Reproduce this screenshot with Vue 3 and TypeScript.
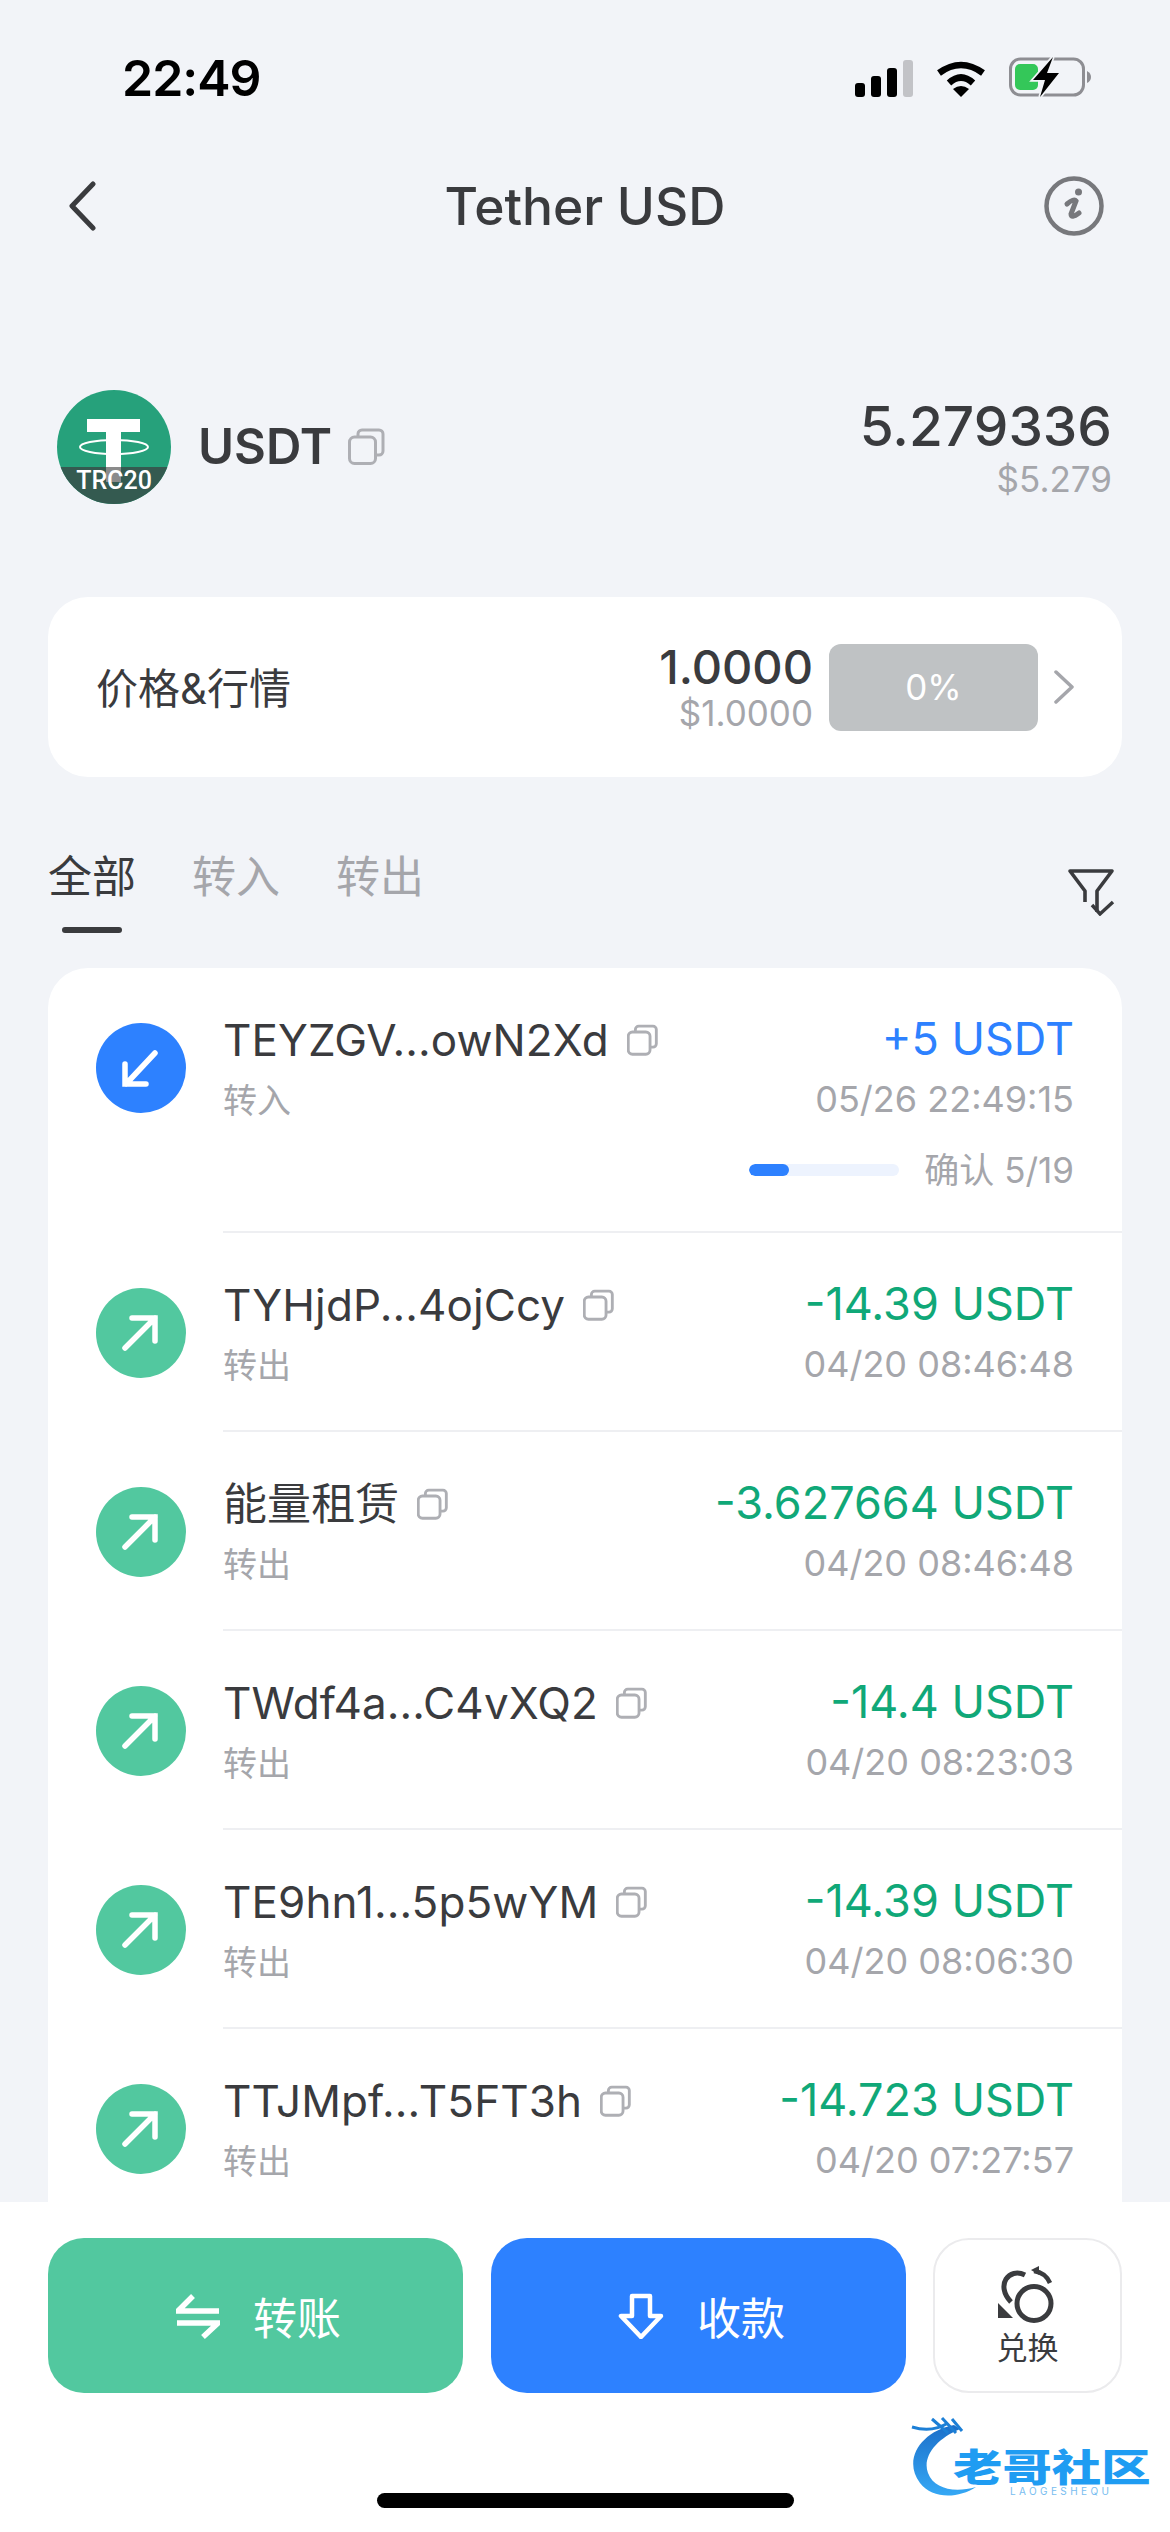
<template>
  <div class="page">
    <div class="content">
      <!-- status bar -->
      <div class="status">
        <span class="time">22:49</span>
        <div class="status-icons">
          <svg width="58" height="37" viewBox="0 0 58 37">
            <rect x="0" y="23" width="10" height="14" rx="3" fill="#000" />
            <rect x="16" y="16" width="10" height="21" rx="3" fill="#000" />
            <rect x="32" y="8" width="10" height="29" rx="3" fill="#000" />
            <rect x="48" y="0" width="10" height="37" rx="3" fill="#c2c3c7" />
          </svg>
          <svg width="50" height="37" viewBox="0 0 50 37">
            <path d="M3 13Q25 -3 47 13" fill="none" stroke="#000" stroke-width="6.5" />
            <path d="M13 23Q25 12 37 23" fill="none" stroke="#000" stroke-width="6.5" />
            <path d="M25 37L17 29Q25 23 33 29Z" fill="#000" />
          </svg>
          <svg width="84" height="42" viewBox="0 0 84 42">
            <rect x="1.5" y="2" width="73" height="36" rx="10" fill="none" stroke="#8e8e93" stroke-width="3" />
            <path d="M78 14Q82 16 82 20Q82 24 78 26Z" fill="#8e8e93" />
            <rect x="6" y="7" width="23" height="26" rx="5" fill="#34c759" />
            <path d="M44 0L24 23H36L31 40L50 16H38Z" fill="#000" stroke="#f2f4f8" stroke-width="3.5" paint-order="stroke" />
          </svg>
        </div>
      </div>

      <!-- nav -->
      <div class="nav">
        <svg class="back" width="32" height="50" viewBox="0 0 32 50">
          <path d="M27 3L6 25L27 47" fill="none" stroke="#3a3b3e" stroke-width="5" stroke-linecap="round" stroke-linejoin="round" />
        </svg>
        <span class="nav-title">Tether USD</span>
        <svg class="info" width="60" height="60" viewBox="0 0 60 60">
          <circle cx="30" cy="30" r="27.5" fill="none" stroke="#77787c" stroke-width="4.5" />
          <circle cx="34.5" cy="16" r="3.5" fill="#77787c" />
          <path d="M23 28Q30 22 32 25L27 38Q27 43 35 37" fill="none" stroke="#77787c" stroke-width="5" stroke-linecap="round" />
        </svg>
      </div>

      <!-- asset -->
      <div class="asset">
        <div class="asset-left">
          <svg width="114" height="114" viewBox="0 0 114 114">
            <defs>
              <clipPath id="logoClip"><circle cx="57" cy="57" r="57" /></clipPath>
            </defs>
            <circle cx="57" cy="57" r="57" fill="#26a17b" />
            <rect x="30" y="29" width="53" height="13" fill="#fff" />
            <rect x="49" y="42" width="15" height="36" fill="#fff" />
            <ellipse cx="57" cy="57" rx="34" ry="7" fill="none" stroke="#fff" stroke-width="2" />
            <g clip-path="url(#logoClip)">
              <rect x="0" y="77" width="114" height="37" fill="#345a50" />
              <rect x="49" y="77" width="15" height="15" fill="#8b8b8b" />
            </g>
            <text x="57" y="99" text-anchor="middle" class="logo-text">TRC20</text>
          </svg>
          <span class="asset-name">USDT</span>
          <svg width="37" height="37" viewBox="0 0 37 37">
            <path d="M10 8V6a4 4 0 0 1 4-4H31a4 4 0 0 1 4 4V23a4 4 0 0 1-4 4H28" fill="none" stroke="#aeafb4" stroke-width="3" />
            <rect x="1.5" y="9" width="26" height="26.5" rx="5" fill="none" stroke="#aeafb4" stroke-width="3" />
          </svg>
        </div>
        <div class="asset-right">
          <div class="balance">5.279336</div>
          <div class="fiat">$5.279</div>
        </div>
      </div>

      <!-- price card -->
      <div class="price-card">
        <span class="price-label">价格&amp;行情</span>
        <div class="price-right">
          <div class="price-values">
            <div class="price-main">1.0000</div>
            <div class="price-fiat">$1.0000</div>
          </div>
          <div class="chip">0%</div>
          <svg width="22" height="34" viewBox="0 0 22 34">
            <path d="M3 2L19 17L3 32" fill="none" stroke="#a5a6ab" stroke-width="3.5" stroke-linecap="round" stroke-linejoin="round" />
          </svg>
        </div>
      </div>

      <!-- tabs -->
      <div class="tabs">
        <div class="tab-list">
          <div v-for="tab in tabs" :key="tab" class="tab" :class="{ active: tab === activeTab }">
            <span>{{ tab }}</span>
            <i class="tab-line"></i>
          </div>
        </div>
        <svg class="filter" width="48" height="48" viewBox="0 0 48 48">
          <path d="M30 44V23L45 3H3L18 23V34" fill="none" stroke="#3a3b3e" stroke-width="3.6" stroke-linejoin="round" />
          <path d="M25 37L33 46L46 34" fill="none" stroke="#3a3b3e" stroke-width="3.4" />
        </svg>
      </div>

      <!-- records -->
      <div class="list">
        <div v-for="item in records" :key="item.name" class="row">
          <div class="row-icon" :class="item.dir">
            <svg v-if="item.dir === 'in'" width="90" height="90" viewBox="0 0 90 90">
              <path d="M59 30L30 61M29 41V61H50" fill="none" stroke="#fff" stroke-width="5.5" stroke-linecap="round" />
            </svg>
            <svg v-else width="90" height="90" viewBox="0 0 90 90">
              <path d="M29 60L59 30M36 30H59V53" fill="none" stroke="#fff" stroke-width="5.5" stroke-linecap="round" />
            </svg>
          </div>
          <div class="row-body">
            <div class="row-line">
              <div class="row-left">
                <div class="row-name">
                  <span>{{ item.name }}</span>
                  <svg width="31" height="32" viewBox="0 0 37 37">
                    <path d="M10 8V6a4 4 0 0 1 4-4H31a4 4 0 0 1 4 4V23a4 4 0 0 1-4 4H28" fill="none" stroke="#aeafb4" stroke-width="3.4" />
                    <rect x="1.5" y="9" width="26" height="26.5" rx="5" fill="none" stroke="#aeafb4" stroke-width="3.4" />
                  </svg>
                </div>
                <div class="row-sub">{{ item.dir === 'in' ? '转入' : '转出' }}</div>
              </div>
              <div class="row-right">
                <div class="row-amount" :class="item.dir">{{ item.amount }}</div>
                <div class="row-date">{{ item.date }}</div>
              </div>
            </div>
            <div v-if="item.confirm" class="confirm">
              <div class="confirm-bar">
                <div class="confirm-fill" :style="{ width: (item.confirm[0] / item.confirm[1]) * 100 + '%' }"></div>
              </div>
              <span class="confirm-text">确认 {{ item.confirm[0] }}/{{ item.confirm[1] }}</span>
            </div>
          </div>
        </div>
      </div>
    </div>

    <!-- bottom actions -->
    <div class="bottom">
      <div class="actions">
        <div class="btn green">
          <svg width="44" height="46" viewBox="0 0 44 46">
            <path d="M17 3L2 18H43M1 30H42L27 44" fill="none" stroke="#fff" stroke-width="5.5" />
          </svg>
          <span>转账</span>
        </div>
        <div class="btn blue">
          <svg width="46" height="46" viewBox="0 0 46 46">
            <path d="M14 3H32V23H43L23 44L3 23H14Z" fill="none" stroke="#fff" stroke-width="4.5" stroke-linejoin="round" />
          </svg>
          <span>收款</span>
        </div>
        <div class="swap">
          <svg width="62" height="60" viewBox="0 0 62 60">
            <circle cx="37" cy="38.5" r="17" fill="none" stroke="#3a3b3e" stroke-width="5" />
            <path d="M28 10C12 2 -2 20 14 37" fill="none" stroke="#3a3b3e" stroke-width="5" />
            <path d="M37 6C44 7 50 11 53 18" fill="none" stroke="#3a3b3e" stroke-width="4.5" />
            <path d="M34 5L42 1V10Z" fill="#3a3b3e" />
            <path d="M1 38L16 53H1Z" fill="#3a3b3e" />
          </svg>
          <span>兑换</span>
        </div>
      </div>
      <div class="home-bar"></div>

      <!-- watermark -->
      <div class="watermark">
        <svg width="70" height="90" viewBox="0 0 70 90">
          <defs>
            <linearGradient id="wmGrad" x1="0" y1="0" x2="0" y2="1">
              <stop offset="0" stop-color="#1c6fc9" />
              <stop offset="1" stop-color="#35a8f5" />
            </linearGradient>
          </defs>
          <path d="M46 10C14 16 -6 44 12 68C24 84 50 84 68 72C46 78 26 74 20 58C14 42 28 24 52 14Z" fill="url(#wmGrad)" />
          <path d="M4 12Q24 18 40 8M24 4L40 18M34 3L48 18M44 4L54 16" fill="none" stroke="#1c7fd6" stroke-width="3" />
        </svg>
        <div class="wm-text">老哥社区</div>
        <div class="wm-sub">LAOGESHEQU</div>
      </div>
    </div>
  </div>
</template>

<script setup lang="ts">
interface TxRecord {
  name: string
  dir: 'in' | 'out'
  amount: string
  date: string
  confirm?: [number, number]
}

const tabs: string[] = ['全部', '转入', '转出']
const activeTab = '全部'

const records: TxRecord[] = [
  { name: 'TEYZGV...owN2Xd', dir: 'in', amount: '+5 USDT', date: '05/26 22:49:15', confirm: [5, 19] },
  { name: 'TYHjdP...4ojCcy', dir: 'out', amount: '-14.39 USDT', date: '04/20 08:46:48' },
  { name: '能量租赁', dir: 'out', amount: '-3.627664 USDT', date: '04/20 08:46:48' },
  { name: 'TWdf4a...C4vXQ2', dir: 'out', amount: '-14.4 USDT', date: '04/20 08:23:03' },
  { name: 'TE9hn1...5p5wYM', dir: 'out', amount: '-14.39 USDT', date: '04/20 08:06:30' },
  { name: 'TTJMpf...T5FT3h', dir: 'out', amount: '-14.723 USDT', date: '04/20 07:27:57' }
]
</script>

<style scoped>
.page {
  position: relative;
  width: 1170px;
  height: 2532px;
  display: flex;
  flex-direction: column;
  overflow: hidden;
  background: #f2f4f8;
  color: #3a3b3e;
  font-family: Inter, "Noto Sans CJK SC", sans-serif;
}

.content {
  flex: 1;
  min-height: 0;
  overflow: hidden;
}

.status {
  height: 156px;
  display: flex;
  align-items: center;
  justify-content: space-between;
  padding: 0 77px 0 122px;
}

.time {
  font-size: 50px;
  font-weight: 600;
  color: #000;
  letter-spacing: -1px;
}

.status-icons {
  display: flex;
  align-items: center;
  gap: 23px;
}

.nav {
  height: 100px;
  display: flex;
  align-items: center;
  padding: 0 66px;
}

.back {
  margin-right: 28px;
}

.nav-title {
  flex: 1;
  text-align: center;
  font-size: 51.5px;
  font-weight: 500;
}

.asset {
  margin-top: 134px;
  height: 113px;
  display: flex;
  align-items: center;
  justify-content: space-between;
  padding: 0 58px 0 57px;
}

.asset-left {
  display: flex;
  align-items: center;
}

.logo-text {
  font-family: Roboto, sans-serif;
  font-size: 25px;
  font-weight: 500;
  fill: #fff;
}

.asset-name {
  font-size: 49px;
  font-weight: 600;
  margin: 0 16px 0 27px;
}

.asset-right {
  text-align: right;
}

.balance {
  font-size: 55px;
  font-weight: 500;
  line-height: 64px;
}

.fiat {
  font-size: 35px;
  line-height: 40px;
  margin-top: 1px;
  color: #a5a6ab;
}

.price-card {
  margin: 94px 48px 0;
  height: 180px;
  background: #fff;
  border-radius: 40px;
  display: flex;
  align-items: center;
  justify-content: space-between;
  padding: 0 47px 0 48px;
}

.price-label {
  font-size: 42px;
  margin-top: -4px;
}

.price-right {
  display: flex;
  align-items: center;
}

.price-values {
  text-align: right;
}

.price-main {
  font-size: 47px;
  font-weight: 500;
  line-height: 52px;
}

.price-fiat {
  font-size: 35px;
  line-height: 40px;
  color: #a5a6ab;
}

.chip {
  width: 209px;
  height: 87px;
  margin: 0 15px 0 16px;
  border-radius: 12px;
  background: #bfc2c4;
  color: #fff;
  font-size: 35px;
  display: flex;
  align-items: center;
  justify-content: center;
}

.tabs {
  margin-top: 71px;
  padding: 0 55px 0 48px;
  display: flex;
  align-items: flex-start;
  justify-content: space-between;
}

.tab-list {
  display: flex;
  gap: 56px;
}

.tab {
  display: flex;
  flex-direction: column;
  align-items: center;
  font-size: 44px;
  line-height: 58px;
  color: #a5a6ab;
}

.tab.active {
  color: #3a3b3e;
}

.tab-line {
  width: 60px;
  height: 6px;
  margin-top: 21px;
  border-radius: 3px;
}

.tab.active .tab-line {
  background: #3a3b3e;
}

.filter {
  margin-top: 20px;
}

.list {
  margin: 35px 48px 0;
  background: #fff;
  border-radius: 40px 40px 0 0;
}

.row {
  display: flex;
  padding-left: 48px;
}

.row-icon {
  width: 90px;
  height: 90px;
  margin: 55px 37px 0 0;
  border-radius: 50%;
  flex-shrink: 0;
}

.row-icon.in {
  background: #2d81ff;
}

.row-icon.out {
  background: #52c89f;
}

.row-body {
  flex: 1;
  min-width: 0;
  padding: 44px 48px 0 0;
  min-height: 199px;
  box-sizing: border-box;
  border-bottom: 2px solid #eeeff2;
}

.row-line {
  display: flex;
  justify-content: space-between;
}

.row-name {
  display: flex;
  align-items: center;
  gap: 18px;
  font-size: 44px;
  line-height: 56px;
  letter-spacing: 0.1px;
}

.row-sub {
  font-size: 34px;
  line-height: 40px;
  margin-top: 13px;
  color: #a5a6ab;
}

.row-right {
  text-align: right;
}

.row-amount {
  font-size: 45px;
  line-height: 54px;
}

.row-amount.in {
  color: #2d81ff;
}

.row-amount.out {
  color: #10a878;
}

.row-date {
  font-size: 36px;
  line-height: 40px;
  margin-top: 13px;
  color: #a5a6ab;
}

.confirm {
  display: flex;
  align-items: center;
  justify-content: flex-end;
  gap: 25px;
  height: 40px;
  margin: 29px 0 41px;
}

.confirm-text {
  font-size: 35px;
  line-height: 40px;
  color: #a5a6ab;
}

.confirm-bar {
  width: 150px;
  height: 12px;
  border-radius: 6px;
  background: #edf3fe;
  overflow: hidden;
}

.confirm-fill {
  height: 100%;
  border-radius: 6px;
  background: #2d81ff;
}

.bottom {
  position: relative;
  height: 330px;
  flex-shrink: 0;
  background: #fff;
  padding: 36px 48px 0;
  box-sizing: border-box;
}

.actions {
  display: flex;
  gap: 28px;
  height: 155px;
}

.btn {
  width: 415px;
  box-sizing: border-box;
  padding-left: 6px;
  border-radius: 36px;
  display: flex;
  align-items: center;
  justify-content: center;
  gap: 33px;
  color: #fff;
  font-size: 44px;
}

.btn.green {
  background: #52c89f;
}

.btn.blue {
  background: #2d81ff;
}

.swap {
  flex: 1;
  margin-left: -1px;
  box-sizing: border-box;
  border: 2px solid #ebebed;
  border-radius: 36px;
  display: flex;
  flex-direction: column;
  align-items: center;
  gap: 4px;
  padding-top: 25px;
  font-size: 31px;
  line-height: 38px;
}

.home-bar {
  width: 417px;
  height: 15px;
  margin: 100px auto 0;
  border-radius: 8px;
  background: #000;
}

.watermark {
  position: absolute;
  left: 905px;
  top: 213px;
  width: 250px;
  height: 90px;
}

.watermark svg {
  position: absolute;
  left: 3px;
  top: 0;
}

.wm-text {
  position: absolute;
  left: 48px;
  top: 24px;
  font-size: 38px;
  line-height: 56px;
  font-weight: 900;
  white-space: nowrap;
  color: #1f9cf2;
  transform: scaleX(1.3);
  transform-origin: left center;
}

.wm-sub {
  position: absolute;
  left: 105px;
  top: 70px;
  font-size: 10px;
  line-height: 12px;
  letter-spacing: 3.4px;
  white-space: nowrap;
  color: #78bdf0;
}
</style>

<style>
html,
body {
  margin: 0;
  background: #f2f4f8;
}
</style>
